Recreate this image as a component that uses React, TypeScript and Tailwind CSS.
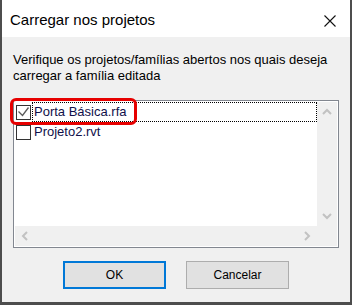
import React from "react";

function Chevron({ dir }: { dir: "up" | "down" | "left" | "right" }) {
  const paths: Record<string, string> = {
    up: "M1 7 L5 3 L9 7",
    down: "M1 3 L5 7 L9 3",
    left: "M7 1 L3 5 L7 9",
    right: "M3 1 L7 5 L3 9",
  };
  return (
    <svg width="10" height="10" viewBox="0 0 10 10" fill="none">
      <path d={paths[dir]} stroke="#c2c2c2" strokeWidth="2" />
    </svg>
  );
}

function CheckBox({ checked }: { checked?: boolean }) {
  return (
    <div className="mt-[3px] w-[15px] h-[15px] border border-[#333333] bg-white shrink-0 relative">
      {checked && (
        <svg width="13" height="13" viewBox="0 0 13 13" className="absolute left-0 top-0" fill="none">
          <path d="M1.5 5.5 L5.5 9.5 L11.5 1.5" stroke="#5a5a5a" strokeWidth="1.3" />
        </svg>
      )}
    </div>
  );
}

export default function App() {
  return (
    <div
      className="relative w-[352px] h-[305px] border-x-2 border-b-[3px] border-[#4d4d4d] bg-[#f0f0f0] flex flex-col text-black"
      style={{ fontFamily: '"Liberation Sans", Arial, sans-serif' }}
    >
      <div className="h-[37px] bg-white flex justify-between pl-[8px] pr-[14px] shrink-0">
        <span className="pt-[11px] text-[15px] leading-[17px] whitespace-nowrap">Carregar nos projetos</span>
        <svg width="12" height="12" viewBox="0 0 12 12" className="mt-[15px]" fill="none">
          <path d="M0.5 0.5 L11.5 11.5 M11.5 0.5 L0.5 11.5" stroke="#111" strokeWidth="1.1" />
        </svg>
      </div>

      <div className="px-[11px] pt-[15px] flex flex-col">
        <div className="text-[13px] leading-[16px]">
          <div className="whitespace-nowrap">Verifique os projetos/famílias abertos nos quais deseja</div>
          <div className="whitespace-nowrap">carregar a família editada</div>
        </div>

        <div className="mt-[16px] h-[148px] border border-[#828790] bg-white p-px flex flex-col">
          <div className="flex h-[124px]">
            <div className="flex-1 flex flex-col bg-white text-[13px] leading-[18px] text-[#10104a] rounded-br-[2px]">
              <div className="flex h-[20px] pl-px">
                <CheckBox checked />
                <div className="ml-px flex-1 border border-dotted border-black pl-px whitespace-nowrap">
                  Porta Básica.rfa
                </div>
              </div>
              <div className="flex h-[20px] pl-px">
                <CheckBox />
                <div className="ml-px flex-1 border border-transparent pl-px whitespace-nowrap">
                  Projeto2.rvt
                </div>
              </div>
            </div>
            <div className="w-[20px] bg-[#f0f0f0] flex flex-col justify-between">
              <div className="h-[20px] flex items-center justify-center">
                <Chevron dir="up" />
              </div>
              <div className="h-[20px] flex items-center justify-center">
                <Chevron dir="down" />
              </div>
            </div>
          </div>
          <div className="flex h-[20px]">
            <div className="flex-1 bg-[#f0f0f0] flex justify-between">
              <div className="w-[20px] flex items-center justify-center">
                <Chevron dir="left" />
              </div>
              <div className="w-[20px] flex items-center justify-center">
                <Chevron dir="right" />
              </div>
            </div>
            <div className="w-[20px] bg-[#f0f0f0]" />
          </div>
        </div>

        <div className="mt-[13px] flex justify-center gap-[20px]">
          <button className="w-[103px] h-[28px] border-2 border-[#0078d7] bg-[#e1e1e1] text-[12px] text-black flex items-center justify-center">
            OK
          </button>
          <button className="w-[103px] h-[28px] border border-[#adadad] bg-[#e1e1e1] text-[12px] text-black flex items-center justify-center">
            Cancelar
          </button>
        </div>
      </div>

      <div className="absolute left-[8px] top-[98px] w-[127px] h-[27px] border-[3px] border-[#e60000] rounded-[6px] pointer-events-none" />
    </div>
  );
}
